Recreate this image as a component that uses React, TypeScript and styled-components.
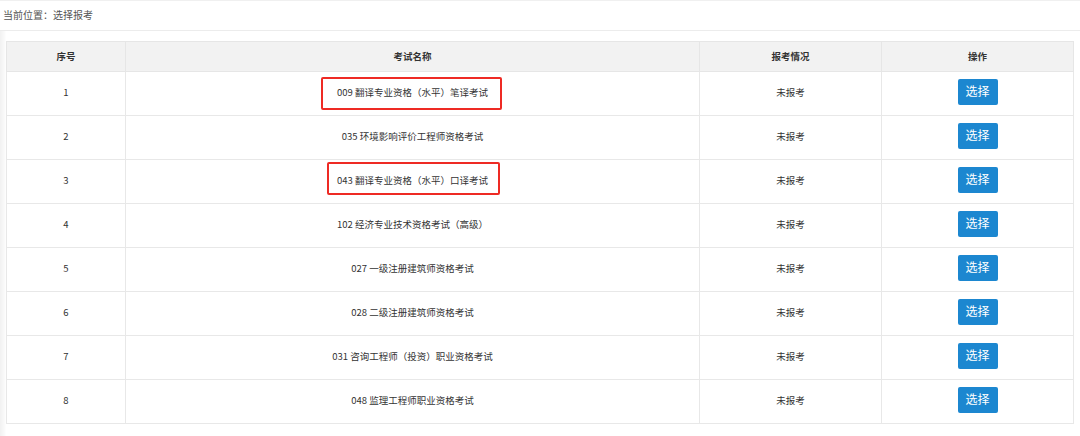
import React from "react";
import styled, { createGlobalStyle } from "styled-components";

const Global = createGlobalStyle`
  html, body { margin: 0; padding: 0; background: #ffffff; }
  body { font-family: "Noto Sans CJK SC", "Noto Sans", sans-serif; color: #333; }
  * { box-sizing: border-box; }
`;

const Page = styled.div`
  width: 1080px;
  height: 436px;
  display: flex;
  flex-direction: column;
  overflow: hidden;
`;

const Breadcrumb = styled.div`
  height: 31px;
  display: flex;
  align-items: center;
  padding-left: 3px;
  padding-bottom: 2px;
  font-size: 10px;
  color: #555;
  border-top: 1px solid #f0f0f0;
  border-bottom: 1px solid #ececec;
`;

const Body = styled.div`
  flex: 1;
  padding: 10px 7px 0 6px;
  background: linear-gradient(to right, #f1f1f1 0, #fbfbfb 5px, #ffffff 6px);
`;

const Table = styled.table`
  width: 1067px;
  border-collapse: collapse;
  table-layout: fixed;
  background: #fff;
`;

const Th = styled.th<{ $w: number }>`
  width: ${(p) => p.$w}px;
  height: 30px;
  padding: 0 0 2px;
  background: #f2f2f2;
  border: 1px solid #e6e6e6;
  font-size: 9.5px;
  font-weight: 700;
  color: #333;
  text-align: center;
  line-height: 14px;
`;

const Td = styled.td`
  position: relative;
  height: 44px;
  padding: 0 0 3px;
  border: 1px solid #e8e8e8;
  font-size: 9.5px;
  line-height: 14px;
  color: #333;
  text-align: center;
  vertical-align: middle;
`;

const Mark = styled.span<{ $dx: number; $top: number; $w: number }>`
  position: absolute;
  left: calc(50% + ${(p) => p.$dx}px);
  top: ${(p) => p.$top}px;
  width: ${(p) => p.$w}px;
  height: 33px;
  border: 2px solid #ee2a24;
  border-radius: 2px;
  pointer-events: none;
`;

const SelectButton = styled.button`
  display: inline-block;
  vertical-align: middle;
  width: 40px;
  height: 26px;
  padding: 0 0 2px;
  border: none;
  border-radius: 2px;
  background: #1c87d0;
  color: #fff;
  font-family: "Noto Sans CJK SC", sans-serif;
  font-size: 12px;
  line-height: 24px;
  cursor: pointer;
`;

type Row = { no: number; name: string; mark?: { dx: number; top: number; w: number } };

const rows: Row[] = [
  { no: 1, name: "009 翻译专业资格（水平）笔译考试", mark: { dx: -92, top: 5, w: 181 } },
  { no: 2, name: "035 环境影响评价工程师资格考试" },
  { no: 3, name: "043 翻译专业资格（水平）口译考试", mark: { dx: -86, top: 2, w: 173 } },
  { no: 4, name: "102 经济专业技术资格考试（高级）" },
  { no: 5, name: "027 一级注册建筑师资格考试" },
  { no: 6, name: "028 二级注册建筑师资格考试" },
  { no: 7, name: "031 咨询工程师（投资）职业资格考试" },
  { no: 8, name: "048 监理工程师职业资格考试" },
];

export default function App() {
  return (
    <Page>
      <Global />
      <Breadcrumb>当前位置：选择报考</Breadcrumb>
      <Body>
        <Table>
          <thead>
            <tr>
              <Th $w={119}>序号</Th>
              <Th $w={574}>考试名称</Th>
              <Th $w={182}>报考情况</Th>
              <Th $w={192}>操作</Th>
            </tr>
          </thead>
          <tbody>
            {rows.map((r) => (
              <tr key={r.no}>
                <Td>{r.no}</Td>
                <Td>
                  {r.name}
                  {r.mark && <Mark $dx={r.mark.dx} $top={r.mark.top} $w={r.mark.w} />}
                </Td>
                <Td>未报考</Td>
                <Td>
                  <SelectButton>选择</SelectButton>
                </Td>
              </tr>
            ))}
          </tbody>
        </Table>
      </Body>
    </Page>
  );
}
